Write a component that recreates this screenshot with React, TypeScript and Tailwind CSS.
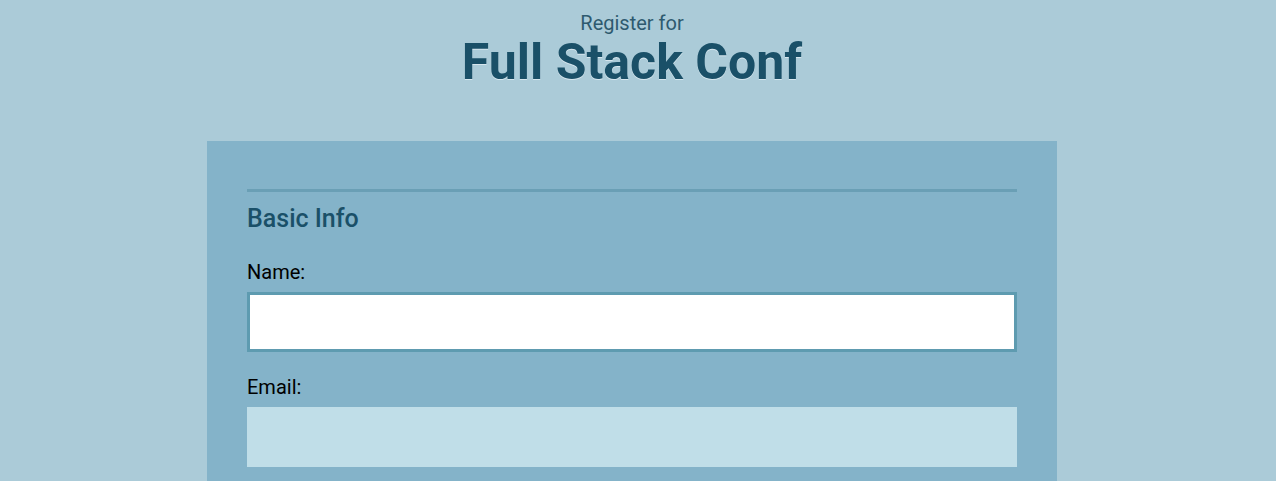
export default function App() {
  return (
    <div className="min-h-screen bg-[#abcbd8] pr-3 font-['Roboto',sans-serif]">
      <header className="pt-3 text-center">
        <p className="text-[20px] leading-[22px] text-[#2e5a6f]">Register for</p>
        <h1 className="text-[50px] leading-[56px] font-bold text-[#1a5068] [text-shadow:0_1px_0_#d6e6ee]">
          Full Stack Conf
        </h1>
      </header>

      <form className="mx-auto mt-[51px] w-[850px] bg-[#84b3c9] px-10 pt-12 pb-10">
        <section className="border-t-[3px] border-[#6a9fb5]">
          <h2 className="mt-3 text-[25px] leading-[30px] font-medium text-[#1a5068]">Basic Info</h2>

          <label htmlFor="name" className="mt-[26px] block text-[20px] leading-[24px] text-black">
            Name:
          </label>
          <input
            id="name"
            type="text"
            className="mt-[8px] block h-[60px] w-full border-[3px] border-[#5e9bb0] bg-white outline-none"
          />

          <label htmlFor="mail" className="mt-[23px] block text-[20px] leading-[24px] text-black">
            Email:
          </label>
          <input
            id="mail"
            type="email"
            className="mt-[8px] block h-[60px] w-full bg-[#c0dee8] outline-none"
          />
        </section>
      </form>
    </div>
  );
}
